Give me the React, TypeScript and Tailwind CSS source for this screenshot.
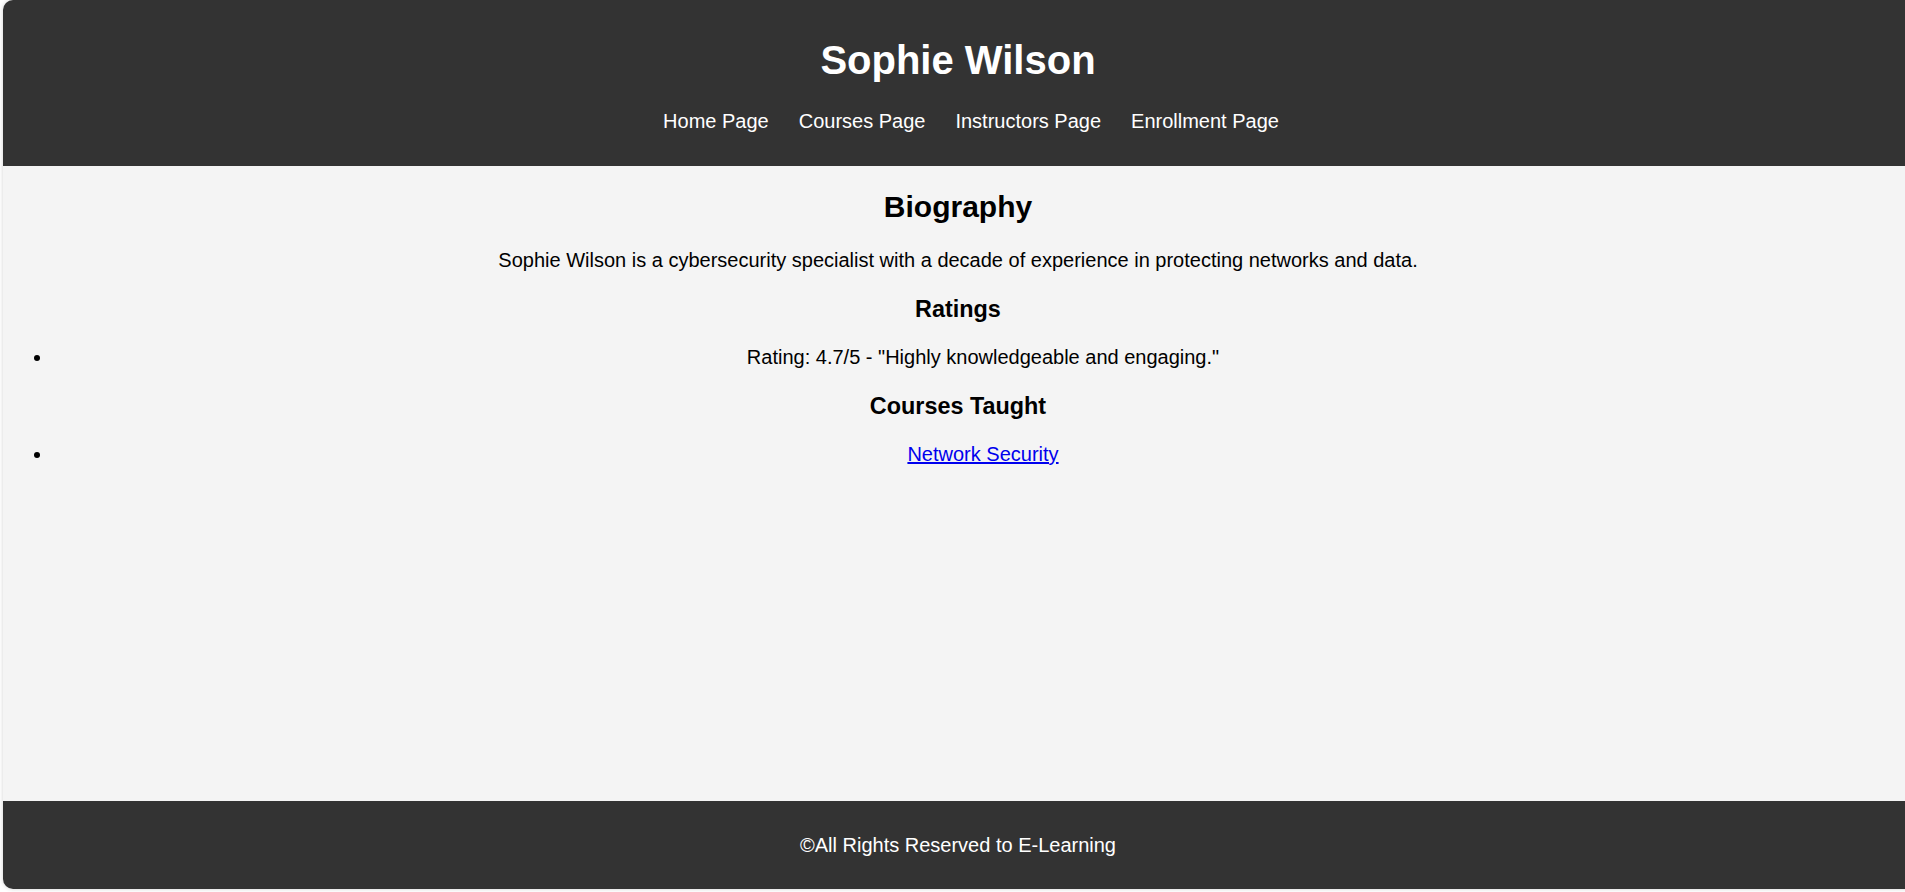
const navLinks = ["Home Page", "Courses Page", "Instructors Page", "Enrollment Page"];

const App = () => {
  return (
    <div className="w-full h-[892px] overflow-hidden bg-white font-['Liberation_Sans',Arial,sans-serif]">
      <div className="ml-[3px] w-[1910px] rounded-l-[10px] shadow-[0_0_4px_rgba(0,0,0,0.18)] overflow-hidden">
        {/* header */}
        <header className="bg-[#333] text-white text-center pt-[37px] pb-[33px]">
          <h1 className="text-[40px] leading-[46px] font-bold mb-[26.5px]">Sophie Wilson</h1>
          <nav className="flex justify-center gap-[30px] pl-[26px] text-[20px] leading-[23px]">
            {navLinks.map((l) => (
              <a key={l} href="#" className="text-white">
                {l}
              </a>
            ))}
          </nav>
        </header>

        {/* main */}
        <main className="bg-[#f4f4f4] h-[635px] text-black text-center pt-[23.5px]">
          <h2 className="text-[30px] leading-[35px] font-bold">Biography</h2>
          <p className="text-[20px] leading-[23px] mt-[25px]">
            Sophie Wilson is a cybersecurity specialist with a decade of experience in protecting networks and data.
          </p>
          <h3 className="text-[23.4px] leading-[27px] font-bold mt-[24px]">Ratings</h3>
          <ul className="list-disc pl-[50px] mt-[23px] text-[20px] leading-[23px]">
            <li>Rating: 4.7/5 - "Highly knowledgeable and engaging."</li>
          </ul>
          <h3 className="text-[23.4px] leading-[27px] font-bold mt-[24px]">Courses Taught</h3>
          <ul className="list-disc pl-[50px] mt-[23px] text-[20px] leading-[23px]">
            <li>
              <a href="#" className="text-[#0000ee] underline">
                Network Security
              </a>
            </li>
          </ul>
        </main>

        {/* footer */}
        <footer className="bg-[#333] text-white text-center text-[20px] leading-[24px] py-[32px]">
          <p>©All Rights Reserved to E-Learning</p>
        </footer>
      </div>
    </div>
  );
};

export default App;
